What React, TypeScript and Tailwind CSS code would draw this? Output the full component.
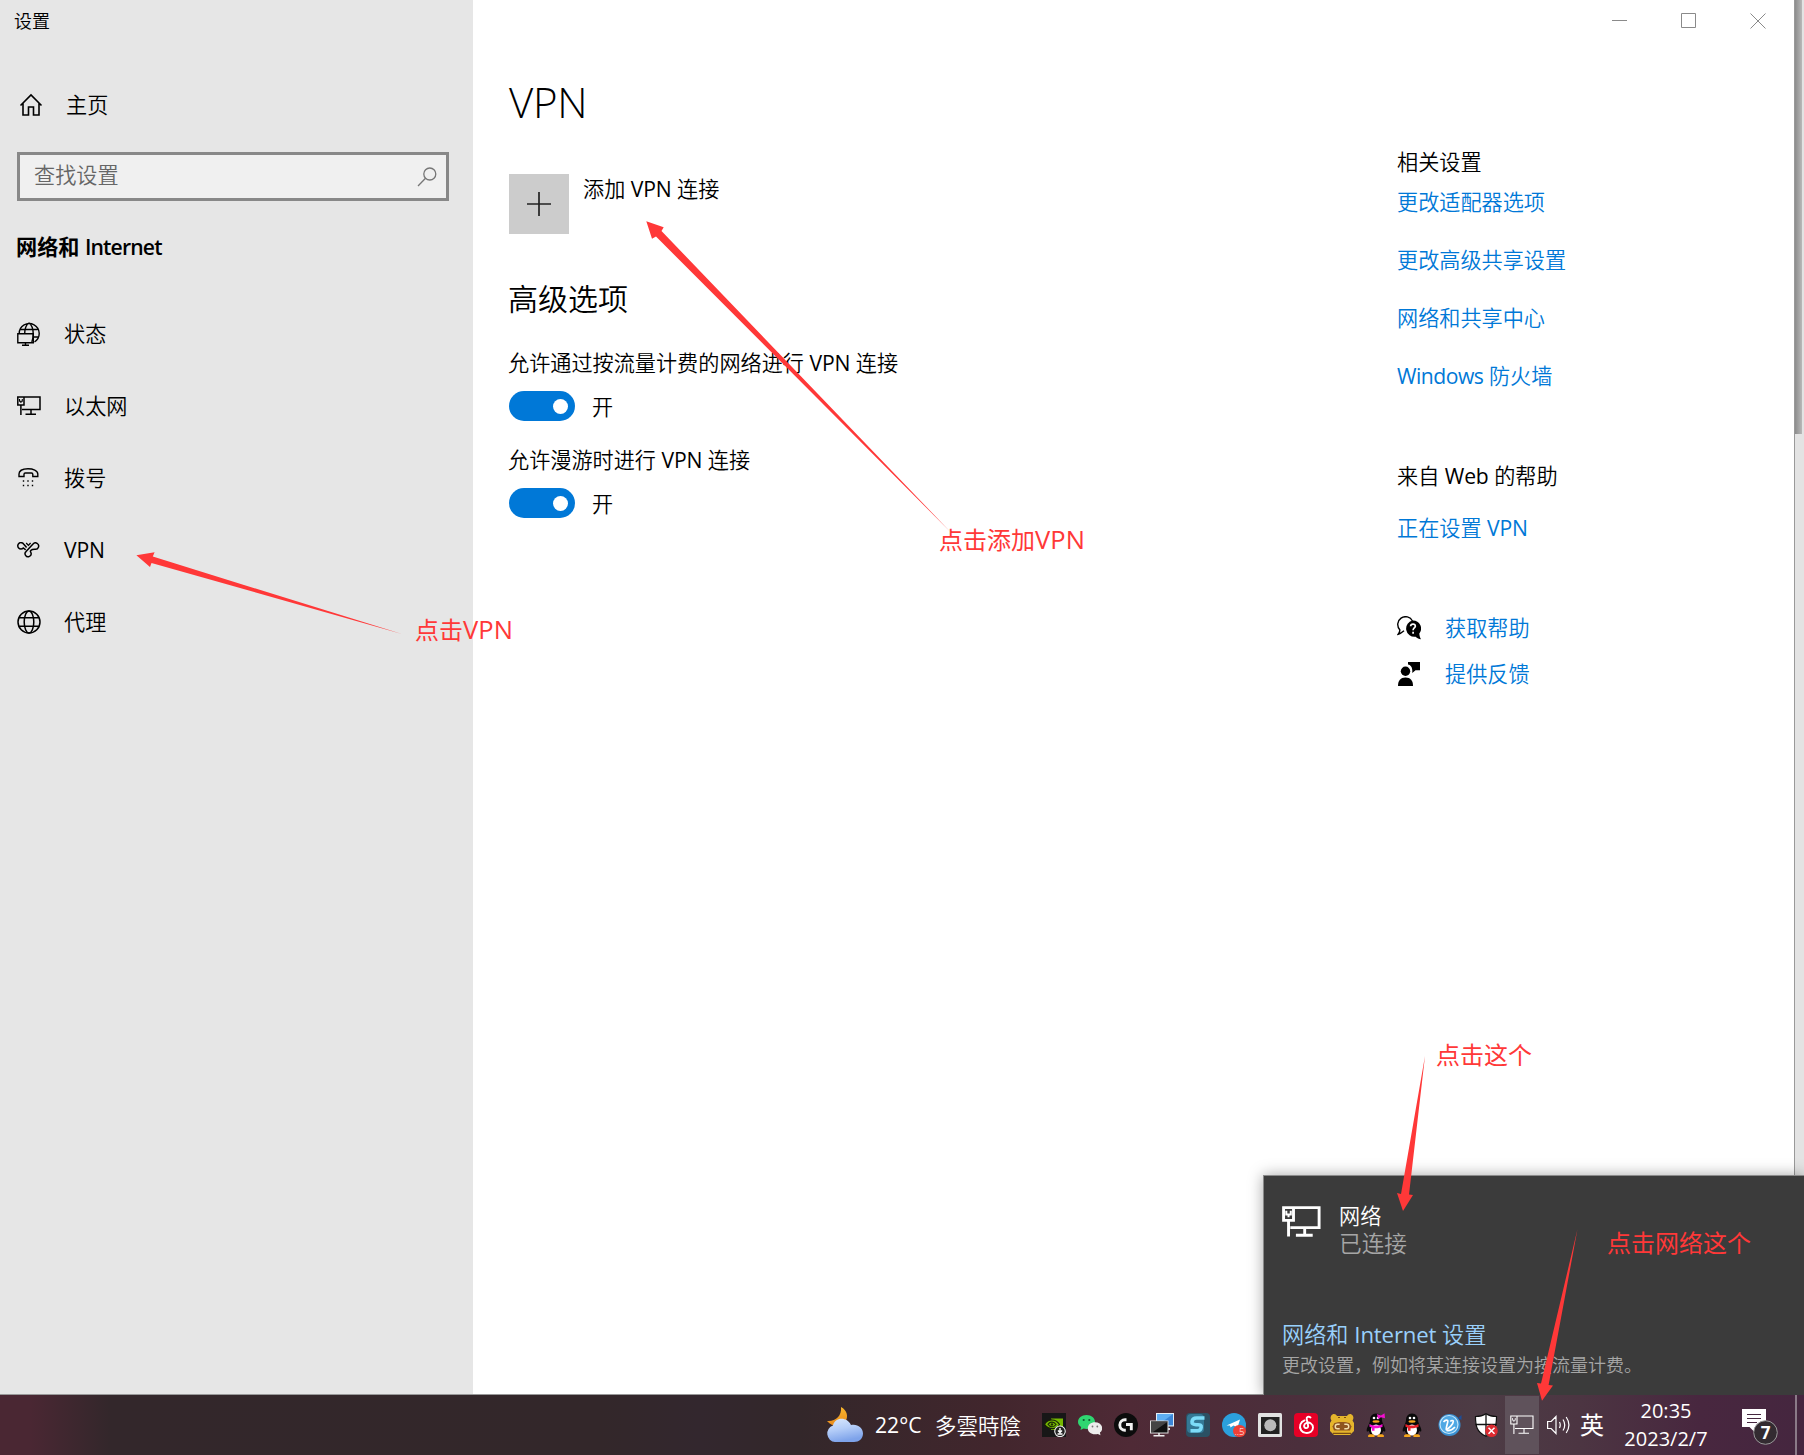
import React from 'react';

type IconProps = { className?: string };

const HomeIcon = ({ className }: IconProps) => (
  <svg viewBox="0 0 24 24" className={className} fill="none" stroke="#000" strokeWidth="1.6">
    <path d="M1.5 12.5 12 2l10.500 10.500M4 10.500V22h5.500v-8h5v8H20V10.500" />
  </svg>
);

const SearchIcon = ({ className }: IconProps) => (
  <svg viewBox="0 0 20 20" className={className} fill="none" stroke="#767676" strokeWidth="1.300">
    <circle cx="12.800" cy="7" r="6" />
    <path d="M8.500 11.300 1 19" />
  </svg>
);

const StatusIcon = ({ className }: IconProps) => (
  <svg viewBox="0 0 24 24" className={className} fill="none" stroke="#000" strokeWidth="1.400">
    <path d="M2.200 11.500a10 10 0 1 1 15.300 8.500M12 1c-3 2-4.300 6-4.300 10.500M12 1c3 2.200 4.300 6 4.200 11 0 3-.5 6-1.400 8M3.500 7.500h17M16.500 15h5" />
    <path d="M.8 11.700h15.500v9H.8zM8.500 20.700v2.600M5 23.300h7" />
  </svg>
);

const EthernetIcon = ({ className, w = 1.5 }: IconProps & { w?: number }) => (
  <svg viewBox="0 0 24 20" className={className} fill="none" stroke="currentColor" strokeWidth={w}>
    <path d="M7 1h16v12.500H5M.8 1H7v8H.8zM3.900 9v10M14 13.500V18M8.500 18.300h10.500" />
    <path d="M2.500 3v2.300h2.800V3M3.900 5.300V7" strokeWidth={w * 0.7} />
  </svg>
);

const DialIcon = ({ className }: IconProps) => (
  <svg viewBox="0 0 24 24" className={className} fill="none" stroke="#000" strokeWidth="1.400">
    <path d="M2 10.500V8c0-3.500 4-5.300 9-5.300s9.800 1.800 9.800 5.300v2.500h-5V8.200c0-1-.5-1.200-1.300-1.200H8.300c-.8 0-1.300.300-1.300 1.200v2.300z" />
    <path d="M5.800 15h1.400M10.300 15h1.400M14.800 15h1.400M5.800 19.500h1.400M10.300 19.500h1.400M14.800 19.500h1.400" strokeWidth="1.300" />
  </svg>
);

const VpnIcon = ({ className }: IconProps) => (
  <svg viewBox="0 0 24 16" className={className} fill="none" stroke="#000" strokeWidth="1.500">
    <path d="M8.700 7.800 6.300 6A3.200 3.200 0 1 1 6.600 2L9.600 5.600" />
    <path d="M9.200 1 11.400 3.400 13.600 1" strokeWidth="1.300" />
    <path d="M9.300 9.300 16 2a3.200 3.200 0 1 1 1.800 5.200c-1.800 0-3.200.300-4 1.200-.8.900-.5 1.400.1 2.200a3 3 0 1 1-4.600-1.300z" />
  </svg>
);

const GlobeIcon = ({ className }: IconProps) => (
  <svg viewBox="0 0 24 24" className={className} fill="none" stroke="#000" strokeWidth="1.500">
    <circle cx="12" cy="12" r="11" />
    <ellipse cx="12" cy="12" rx="4.800" ry="11" />
    <path d="M2 7.700h20M2 16.300h20" />
  </svg>
);

const HelpIcon = ({ className }: IconProps) => (
  <svg viewBox="0 0 24 24" className={className}>
    <path d="M7 14.800C5 16.500 3 17.800 1.200 18.300c1-1.300 1.600-3 1.700-4.400A7.800 7.800 0 1 1 15.500 5" fill="none" stroke="#000" strokeWidth="1.400" />
    <path d="M16 4.500a8 8 0 0 1 6.300 13c.1 1.900.7 4 1.700 5.800-2-.3-4-1.300-5.300-2.600A8.200 8.200 0 1 1 16 4.500z" />
    <path d="M13.600 10.300c.2-3.200 5-2.800 4.700 0-.2 1.700-2.200 1.800-2.200 4M16.100 15.800v2" fill="none" stroke="#fff" strokeWidth="1.700" />
  </svg>
);

const FeedbackIcon = ({ className }: IconProps) => (
  <svg viewBox="0 0 24 24" className={className}>
    <circle cx="8.500" cy="9.300" r="4.700" />
    <path d="M1 24c0-5.500 2.500-8.500 7.500-8.500S16 18.500 16 24z" />
    <path d="M11 0h12v8.200h-4.500L15.300 11V8.200C15 4.500 13.500 3 11 2.500z" />
  </svg>
);

const WeatherIcon = () => (
  <svg viewBox="0 0 37 36" className="h-9 w-[37px]">
    <defs>
      <linearGradient id="moon" x1="0" y1="0" x2="0" y2="1">
        <stop offset="0" stopColor="#f8b62d" />
        <stop offset="1" stopColor="#e88a1c" />
      </linearGradient>
      <linearGradient id="cloud" x1="0" y1="0" x2="0.300" y2="1">
        <stop offset="0" stopColor="#dbe9fd" />
        <stop offset="0.500" stopColor="#b4cdf8" />
        <stop offset="1" stopColor="#7ea3ea" />
      </linearGradient>
    </defs>
    <path d="M15 0c6 3 8 10 4 15-4 5-12 6-18-1 8 1 15-5 14-14z" fill="url(#moon)" />
    <path d="M9 35a8.500 8.500 0 0 1-2-16.500C8.500 10 21 9 25 18c6-1.500 12 2.500 12 8.500 0 5-4 8.500-9 8.500z" fill="url(#cloud)" />
  </svg>
);

const tray: React.ReactNode[] = [
  <>
    <rect width="24" height="24" fill="#171717" />
    <path d="M9 5.500h12V17H9z" fill="#76b900" />
    <path d="M2.500 11.300C6 5.500 14 5.500 17.500 11.500c-3 5.500-11 5.500-15-.2z" fill="#76b900" stroke="#171f08" strokeWidth="1.200" />
    <path d="M6 11.300c2-3 6-3 8 .2-2 3-6 3-8-.2z" fill="none" stroke="#1c2a06" strokeWidth="1.200" />
    <circle cx="10" cy="11.400" r="1.200" fill="#1c2a06" />
    <circle cx="18" cy="18.300" r="5.300" fill="#222" stroke="#eee" strokeWidth="1.100" />
    <path d="M18 15v4.500m-2-2 2 2 2-2M15.500 21h5" stroke="#fff" strokeWidth="1.400" fill="none" />
  </>,
  <>
    <path d="M8.500 2C13.500 2 17 5 17 9s-3.500 7-8.500 7c-1 0-2-.1-3-.4L2.500 17l.7-3C1.200 12.700 0 11 0 9c0-4 3.500-7 8.500-7z" fill="#2fd671" />
    <circle cx="5.700" cy="7" r="1.100" fill="#0c5a2c" />
    <circle cx="11.300" cy="7" r="1.100" fill="#0c5a2c" />
    <path d="M17 9.200c4.200 0 7.200 2.700 7.200 6 0 1.800-.900 3.300-2.300 4.400l.6 2.600-2.600-1.300c-.9.200-1.900.4-2.900.4-4.200 0-7.200-2.700-7.200-6.100s3-6 7.200-6z" fill="#ececec" />
    <circle cx="14.500" cy="13.500" r=".9" fill="#777" />
    <circle cx="19.300" cy="13.500" r=".9" fill="#777" />
  </>,
  <>
    <circle cx="12" cy="12" r="12" fill="#0c0c0c" />
    <path d="M12.500 6.800H11a5.200 5.200 0 0 0 0 10.400h.8M12 11.500h5.300v5.800" fill="none" stroke="#f2f2f2" strokeWidth="2.900" />
  </>,
  <>
    <rect x="6.500" y=".5" width="17" height="12.500" fill="#5eaef2" stroke="#e5edf5" />
    <path d="M23 1v11L8 12z" fill="#3b86d8" />
    <path d="M15 16h5" stroke="#ddd" strokeWidth="2" />
    <rect x=".5" y="8" width="17.500" height="12" fill="#111" stroke="#ddd" />
    <path d="M1 8.500h17L3 19H1z" fill="#444" />
    <path d="M9 20v2.500M3.500 22.700h11" stroke="#eee" strokeWidth="1.500" />
  </>,
  <>
    <rect width="24" height="24" rx="4" fill="#2b5063" />
    <rect x="1" y="1" width="17" height="19" rx="4" fill="#347895" />
    <path d="M18.500 5h-8C7.500 5 6.300 6.800 6 8.600c-.3 2 1.500 3.100 4 3.100h2c2.200 0 3.500.6 3.200 2.500-.3 2.200-1.500 3.500-3.700 3.500H4.500" fill="none" stroke="#7ddcf8" strokeWidth="3.600" />
  </>,
  <>
    <circle cx="12" cy="12" r="12" fill="#2ba0dc" />
    <path d="M4.500 12.500 18 6.500l-2.500 8-4-2-3 2-.5-2z" fill="#fff" />
    <rect x="11" y="12" width="13" height="12" rx="6" fill="#ee4036" />
    <text x="12.500" y="21.500" fontSize="9.500" fill="#fff" fontFamily="Open Sans">..5</text>
  </>,
  <>
    <rect width="24" height="24" rx="1.500" fill="#e2e2e2" />
    <rect x="3" y="4" width="18.500" height="17" fill="#222" />
    <circle cx="12.300" cy="12.300" r="6" fill="#b9b9b9" />
  </>,
  <>
    <rect width="24" height="24" rx="4" fill="#e60026" />
    <path d="M16.500 4.500c-2-1.500-4.300-.5-3.800 1.800l1.400 6.200c.7 3.400-4.300 3.400-4 .2.300-2.700 4-4 6.500-2.400 3.300 2.200 3 6.400.3 8.400-3 2.200-7.700 1.500-9.700-1.300-2.700-4-.7-8.400 3.300-10" fill="none" stroke="#fff" strokeWidth="1.900" strokeLinecap="round" />
  </>,
  <>
    <path d="M1 3c2-3 5-2 6 0h10c1-2 4-3 6 0 1 2 0 3.500-.5 4.500L24 10v8l-4 4H4l-4-4v-8l1.500-2.500C1 6.500 0 5 1 3z" fill="#e5b52c" />
    <path d="M4.500 10c3-1.500 12-1.500 15 0l2 3.500-1.500 4H4l-1.500-4z" fill="#8d5420" />
    <path d="M9.700 11.300H7.500c-3 0-3 4.500 0 4.500h2.200M14.300 11.300h2.200c3 0 3 4.500 0 4.500h-2.200" fill="none" stroke="#f2dfb0" strokeWidth="1.400" />
    <path d="M8 4.500h2m4 0h2M3 20.300h18" stroke="#7a4c12" strokeWidth="1.200" />
  </>,
  <Penguin key="p" bow />,
  <Penguin key="q" />,
  <>
    <circle cx="11.500" cy="12" r="11" fill="#3a8fd0" />
    <circle cx="11" cy="11.500" r="9" fill="#4fa8e4" stroke="#c4e6fa" strokeWidth="1.200" />
    <path d="M5.500 9c2-2.500 4.500-2.300 4.300-.5-.2 2-2 7-1.500 8 2.500-.8 7-5.500 7-8 0-1.500-2-1.200-3 0M8.500 17.500c3 .5 6-.8 8.500-3.500" fill="none" stroke="#fff" strokeWidth="1.700" />
    <path d="M20 5l3.500-3v5z" fill="#1d4f99" />
  </>,
  <>
    <path d="M12 .7c3 2 6.500 2.800 10.500 2.800 0 9-1 15.500-10.500 19.800C2.500 19 1.500 12.500 1.500 3.500 5.500 3.500 9 2.700 12 .7z" fill="#fff" stroke="#111" strokeWidth="1.200" />
    <path d="M12 .7v22.600M1.500 11.500h21" stroke="#111" strokeWidth="1.300" />
    <circle cx="17.500" cy="17.700" r="6.300" fill="#dc2a30" />
    <path d="m14.500 14.700 6 6m0-6-6 6" stroke="#fff" strokeWidth="1.500" />
  </>,
];

function Penguin({ bow }: { bow?: boolean }) {
  return (
    <>
      <path d="M10 .5c4 0 6 3 6 6.500 0 2 1 4 2.200 6.500 1.200 2.500 1.500 4.500.8 5-.6.400-1.500-.8-1.500-.8L15 22H5l-2.500-4.300S1.500 19 1 18.500c-.7-.6-.3-2.800.8-5C3 11 4 9 4 7 4 3.500 6 .5 10 .5z" fill="#0a0a0a" />
      <ellipse cx="10" cy="17" rx="5" ry="5.500" fill="#fff" />
      <circle cx="8" cy="5" r="1.300" fill="#fff" />
      <circle cx="12" cy="5" r="1.300" fill="#fff" />
      <ellipse cx="10" cy="8.500" rx="3.500" ry="1.200" fill="#f5a61d" />
      <path d="M3.500 11c4 2 9 2 13 0v3c-4 1.300-6 1.300-8 1.200v2.500H6V14.500l-2.500-.8z" fill={bow ? '#f30fd0' : '#e8222a'} />
      <path d="M2 23c0-1.800 3-2 6-1.300 1 .3 1 2.300 0 2.300H3c-.7 0-1-.3-1-1zM18 23c0-1.800-3-2-6-1.300-1 .3-1 2.300 0 2.300h5c.7 0 1-.3 1-1z" fill="#f5a61d" />
      {bow && <path d="m11 1 4 1.500L18.500.2l.5 5-4-1L12 6z" fill="#f30fd0" />}
    </>
  );
}

/** Latin run inside Chinese text. */
const L = ({ children }: { children: React.ReactNode }) => <span className="font-normal tracking-[-0.15px]">{children}</span>;

const navItems: [React.ReactNode, React.ReactNode][] = [
  [<StatusIcon className="h-6 w-6" />, '状态'],
  [<EthernetIcon className="h-5 w-6" />, '以太网'],
  [<DialIcon className="h-6 w-6" />, '拨号'],
  [<VpnIcon className="h-4 w-6" />, <L>VPN</L>],
  [<GlobeIcon className="h-6 w-6" />, '代理'],
];

const Toggle = () => (
  <div className="mt-3 flex h-[30px] items-center">
    <div className="flex h-[30px] w-[66px] items-center justify-end rounded-full bg-[#0078d7] pr-[7px]">
      <div className="h-[15px] w-[15px] rounded-full bg-white" />
    </div>
    <span className="ml-[17px] mt-px">开</span>
  </div>
);

const Row = ({ className = '', children }: { className?: string; children: React.ReactNode }) => (
  <div className={'flex h-[30px] items-center whitespace-pre ' + className}>{children}</div>
);

export default function App() {
  return (
    <div className="relative flex h-[1455px] w-[1804px] flex-col overflow-hidden bg-white font-['Open_Sans','Noto_Sans_CJK_SC',sans-serif] text-[21.15px] leading-[30px] font-[350] text-black">
      <div className="flex h-[1395px]">
        <aside className="flex w-[473px] flex-col bg-[#e6e6e6]">
          <div className="flex h-[41px] items-center pl-[14px] text-[18px]">设置</div>
          <div className="mt-[43px] flex h-[42px] items-center pl-[19px]">
            <HomeIcon className="h-6 w-6" />
            <span className="ml-[23px]">主页</span>
          </div>
          <div className="ml-[17px] mt-[26px] flex h-[49px] w-[432px] items-center justify-between border-[3px] border-[#888] bg-[#f0f0f0] pl-[14px] pr-[9px] text-[#666]">
            <span className="-mt-[3px]">查找设置</span>
            <SearchIcon className="h-5 w-5" />
          </div>
          <Row className="mt-[31px] pl-4 font-bold">
            网络和 <span className="font-semibold tracking-[-0.85px]">Internet</span>
          </Row>
          <nav className="mt-[36px]">
            {navItems.map(([icon, label], i) => (
              <div key={i} className="flex h-[72px] items-center pl-[17px]">
                {icon}
                <span className="ml-[23px]">{label}</span>
              </div>
            ))}
          </nav>
        </aside>

        <main className="flex w-[1321px] justify-between pl-9">
          <section className="flex flex-col">
            <h1 className="mt-[74px] h-[57px] text-[42px] font-light leading-[56px] tracking-[-0.3px]">VPN</h1>
            <div className="mt-[43px] flex h-[60px]">
              <div className="flex h-[60px] w-[60px] items-center justify-center bg-[#ccc]">
                <svg viewBox="0 0 24 24" className="h-6 w-6" stroke="#222" strokeWidth="1.700">
                  <path d="M12 0v24M0 12h24" />
                </svg>
              </div>
              <Row className="ml-[14px]">添加 <L>VPN</L> 连接</Row>
            </div>
            <h2 className="-ml-px mt-[45px] flex h-10 items-center text-[30px]">高级选项</h2>
            <Row className="-ml-px mt-[29px]">允许通过按流量计费的网络进行 <L>VPN</L> 连接</Row>
            <div className="mt-px"><Toggle /></div>
            <Row className="-ml-px mt-[24px]">允许漫游时进行 <L>VPN</L> 连接</Row>
            <div className="mt-px"><Toggle /></div>
          </section>

          <section className="flex w-[397px] flex-col">
            <div className="flex h-[42px] items-center justify-end pr-7">
              <svg viewBox="0 0 154 16" className="h-4 w-[154px]" fill="none" stroke="#8a8a8a" strokeWidth="1">
                <path d="M0 7.500h15M69.500.5h14v14h-14zM138.500.5l15 15M153.500.5l-15 15" />
              </svg>
            </div>
            <Row className="mt-[105px]">相关设置</Row>
            <div className="mt-[10px] flex flex-col gap-7 text-[#0078d7]">
              <Row>更改适配器选项</Row>
              <Row>更改高级共享设置</Row>
              <Row>网络和共享中心</Row>
              <Row><span className="tracking-[-0.5px] font-normal">Windows</span> 防火墙</Row>
            </div>
            <Row className="mt-[70px]">来自 <L>Web</L> 的帮助</Row>
            <Row className="mt-[22px] text-[#0078d7]">正在设置 <L>VPN</L></Row>
            <div className="mt-[70px] flex flex-col gap-4 text-[#0078d7]">
              <Row><HelpIcon className="mr-6 h-6 w-6" />获取帮助</Row>
              <Row><FeedbackIcon className="mr-6 h-6 w-6" />提供反馈</Row>
            </div>
          </section>
        </main>

        <div className="flex w-[10px] flex-col border-l border-[#999] bg-[#e3e3e3]">
          <div className="h-[434px] w-[7px] bg-linear-to-r from-[#8c8c8c] to-[#b8b8b8]" />
        </div>
      </div>

      <footer className="flex h-[60px] items-center bg-[linear-gradient(90deg,#4a2733_0px,#4a2733_30px,#33272b_110px,#33272a_600px,#33272e_700px,#33272a_800px,#42262d_1000px,#4f2a36_1130px,#4b2f3c_1300px,#4d3c45_1480px,#4c3542_1580px,#48273f_1700px,#45263f_1804px)] pl-[826px] text-white shadow-[0_-1px_0_#999]">
        <WeatherIcon />
        <span className="ml-3 w-[60px] font-normal">22°C</span>
        <span className="w-[86px] font-['Noto_Sans_CJK_TC',sans-serif] text-[21.5px]">多雲時陰</span>
        <div className="ml-[21px] flex gap-3">
          {tray.map((icon, i) => (
            <svg key={i} viewBox="0 0 24 24" className="h-6 w-6">{icon}</svg>
          ))}
        </div>
        <div className="ml-[7px] flex h-[58px] w-[34px] items-center justify-center bg-[#5f525b]">
          <EthernetIcon className="h-5 w-6" w={1.1} />
        </div>
        <svg viewBox="0 0 23 20" className="ml-2 h-5 w-[23px]" fill="none" stroke="#fff" strokeWidth="1.200">
          <path d="M.6 6.500h3.600L9 1.500v17l-4.800-5H.6zM12.500 7c1 2 1 4 0 6M16 4.500c2.200 3.500 2.200 7.500 0 11M19.200 2c3.400 5 3.400 11 0 16" />
        </svg>
        <span className="ml-[10px] w-6 text-2xl font-normal">英</span>
        <div className="ml-[12px] flex w-[100px] flex-col items-center leading-[28px] text-[20px] font-normal">
          <span>20:35</span>
          <span>2023/2/7</span>
        </div>
        <svg viewBox="0 0 38 38" className="ml-[26px] mt-[4px] h-[38px] w-[38px]">
          <path d="M0 1h24v18H13.500v6L7.500 19H0z" fill="#fff" />
          <path d="M5 6.500h14M5 10.500h14M5 14.500h10" stroke="#45263f" strokeWidth="1.200" />
          <circle cx="23.500" cy="24.500" r="11.800" fill="#332b31" stroke="#999" strokeWidth="1" />
          <text x="23.500" y="30.500" textAnchor="middle" fontSize="17" fontWeight="700" fill="#fff" fontFamily="Open Sans">7</text>
        </svg>
        <div className="ml-[15px] h-full w-[2px] bg-[#8b7a88]" />
      </footer>

      <div className="absolute left-[1263px] top-[1175px] flex h-[220px] w-[541px] flex-col border-l border-t border-[#8a8a8a] bg-[#3b3b3b] pl-[18px] pt-[26px] shadow-[0_0_14px_rgba(0,0,0,0.35)] [clip-path:inset(-20px_0_0_-20px)]">
        <div className="flex">
          <EthernetIcon className="mt-[4px] h-[32px] w-[39px] text-white" w={1.8} />
          <div className="ml-[18px] flex flex-col leading-[28px]">
            <span className="text-white">网络</span>
            <span className="text-[22.700px] text-[#a6a6a6]">已连接</span>
          </div>
        </div>
        <Row className="mt-[62px] text-[22.2px] text-[#99d0fb]">网络和 <L>Internet</L> 设置</Row>
        <Row className="text-[18px] text-[#a6a6a6]">更改设置，例如将某连接设置为按流量计费。</Row>
      </div>

      <svg viewBox="0 0 1804 1455" className="pointer-events-none absolute inset-0 h-full w-full" fill="#ff3838">
        <path d="M136.400 555.300 154.600 552.300 152.800 556.600 402 634 151.500 563 150 567z" />
        <path d="M646.300 221.300 663.700 227.300 661.500 231 951 532.500 656 236.500 652 238.700z" />
        <path d="M1403 1211 1397 1193 1401 1194 1425 1056 1409 1194.500 1413 1195z" />
        <path d="M1542 1400.700 1537 1383 1541 1383.500 1577.500 1229 1548.600 1385 1553 1385.500z" />
      </svg>
      <div className="text-2xl leading-[30px] whitespace-nowrap font-normal text-[#ff3838]">
        <span className="absolute left-[415px] top-[614px]">点击<span className="text-[25.5px] tracking-[0.1px]">VPN</span></span>
        <span className="absolute left-[939px] top-[524px]">点击添加<span className="text-[25.5px] tracking-[0.1px]">VPN</span></span>
        <span className="absolute left-[1436px] top-[1040px]">点击这个</span>
        <span className="absolute left-[1607px] top-[1228px]">点击网络这个</span>
      </div>
    </div>
  );
}
